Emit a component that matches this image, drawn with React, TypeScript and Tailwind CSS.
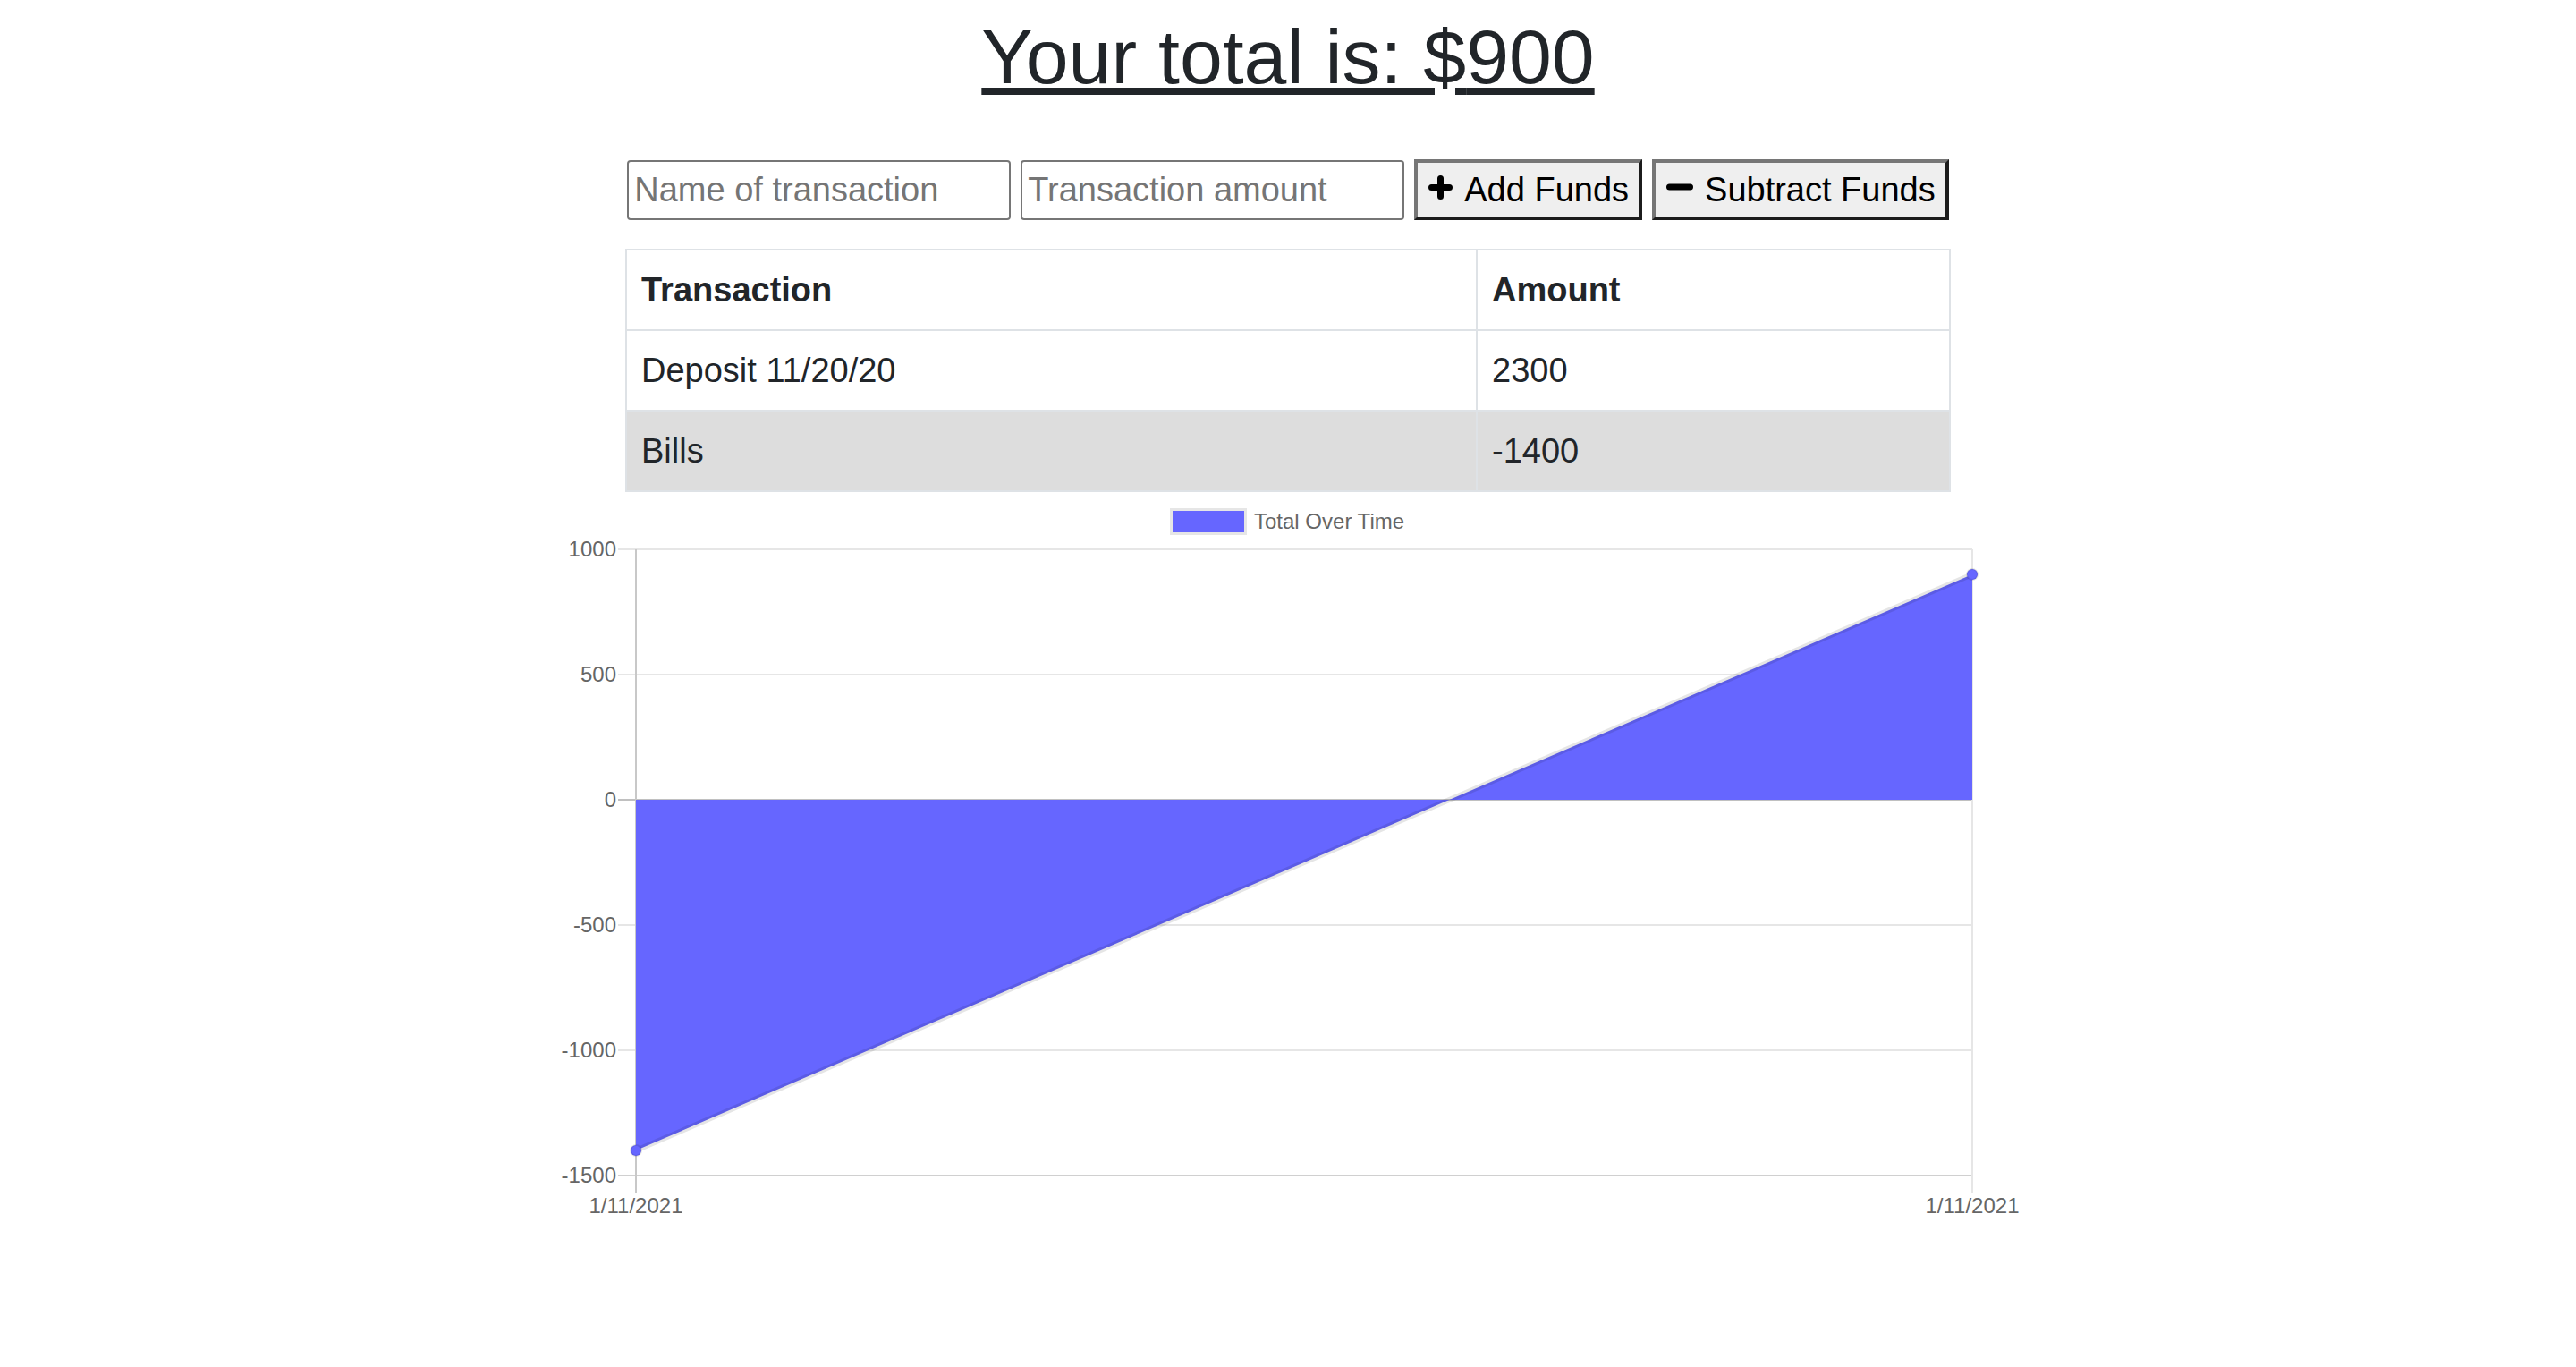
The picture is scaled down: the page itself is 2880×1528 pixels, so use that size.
import type { ReactNode } from 'react';

// budget tracker — total, add/subtract form, transaction table, area chart

const FONT = "font-['Liberation_Sans',Arial,Helvetica,sans-serif]";

const transactions = [
  { name: 'Deposit 11/20/20', value: 2300 },
  { name: 'Bills', value: -1400 },
];

// chart geometry (svg px)
const PLOT_L = 111;
const PLOT_R = 1605;
const PLOT_T = 53;
const ZERO_Y = 333;
const PX_PER_UNIT = 0.28;
const yOf = (v: number) => ZERO_Y - v * PX_PER_UNIT;
const Y_TICKS = [1000, 500, 0, -500, -1000, -1500];
const LABEL_FONT = 'Liberation Sans, Arial, sans-serif';

function PlusIcon() {
  return (
    <svg width="27" height="27" viewBox="0 0 27 27" className="mb-[6px] shrink-0">
      <path d="M3.5 13.5H23.5M13.5 3.5V23.5" stroke="#000" strokeWidth="7" strokeLinecap="round" />
    </svg>
  );
}

function MinusIcon() {
  return (
    <svg width="30" height="8" viewBox="0 0 30 8" className="mb-[6px] shrink-0">
      <rect x="0" y="0.5" width="30" height="7" rx="3.5" fill="#000" />
    </svg>
  );
}

function FundButton({ icon, children }: { icon: ReactNode; children: ReactNode }) {
  return (
    <button
      type="button"
      className="flex h-[68px] items-center gap-[13px] border-4 border-t-[#767676] border-l-[#767676] border-r-[#1c1c1c] border-b-[#1c1c1c] bg-[#efefef] pl-[12px] pr-[11px] text-[38px] text-black"
    >
      {icon}
      <span>{children}</span>
    </button>
  );
}

function TotalChart() {
  const endV = transactions.reduce((s, t) => s + t.value, 0);
  const startV = transactions[transactions.length - 1].value;
  const y0 = yOf(startV);
  const y1 = yOf(endV);
  const bottom = yOf(-1500);

  return (
    <svg width="1680" height="820" viewBox="0 0 1680 820" className="mt-[11px] block">
      {/* legend */}
      <rect x="709.5" y="8.5" width="83" height="27" fill="#6666ff" stroke="#e6e6e6" strokeWidth="3" />
      <text x="802" y="30" fontSize="24" fill="#666" fontFamily={LABEL_FONT}>
        Total Over Time
      </text>

      {/* horizontal grid + y ticks */}
      {Y_TICKS.map((v) => {
        const y = yOf(v);
        const stroke = v === 0 ? '#c0c0c0' : v === -1500 ? '#d0d0d0' : '#e6e6e6';
        return (
          <g key={v}>
            <line x1={91} x2={PLOT_R} y1={y} y2={y} stroke={stroke} strokeWidth="2" />
            <text x="89" y={y + 8} textAnchor="end" fontSize="24" fill="#666" fontFamily={LABEL_FONT}>
              {v}
            </text>
          </g>
        );
      })}

      {/* vertical grid + x ticks */}
      <line x1={PLOT_L} x2={PLOT_L} y1={PLOT_T} y2={bottom + 20} stroke="#c8c8c8" strokeWidth="2" />
      <line x1={PLOT_R} x2={PLOT_R} y1={PLOT_T} y2={bottom + 20} stroke="#e6e6e6" strokeWidth="2" />
      {[PLOT_L, PLOT_R].map((x) => (
        <text key={x} x={x} y="795" textAnchor="middle" fontSize="24" fill="#666" fontFamily={LABEL_FONT}>
          1/11/2021
        </text>
      ))}

      {/* area filled to origin */}
      <path
        d={`M${PLOT_L} ${ZERO_Y} L${PLOT_L} ${y0} L${PLOT_R} ${y1} L${PLOT_R} ${ZERO_Y} Z`}
        fill="#6666ff"
        fillRule="nonzero"
      />
      <line x1={PLOT_L} y1={y0} x2={PLOT_R} y2={y1} stroke="rgba(0,0,0,0.1)" strokeWidth="6" />
      <circle cx={PLOT_L} cy={y0} r="6" fill="#6666ff" stroke="rgba(0,0,0,0.1)" strokeWidth="2" />
      <circle cx={PLOT_R} cy={y1} r="6" fill="#6666ff" stroke="rgba(0,0,0,0.1)" strokeWidth="2" />
    </svg>
  );
}

export default function App() {
  const total = transactions.reduce((s, t) => s + t.value, 0);

  return (
    <div className={`flex min-h-screen flex-col items-center bg-white text-[#212529] ${FONT}`}>
      <h1 className="mt-[12px] text-[86px] leading-[1.2] font-normal underline">Your total is: ${total}</h1>

      <form className="mt-[63px] flex items-center gap-[11px]" onSubmit={(e) => e.preventDefault()}>
        <input
          type="text"
          placeholder="Name of transaction"
          className="h-[67px] w-[429px] rounded-[4px] border-2 border-[#767676] px-[6px] text-[38px] placeholder:text-[#757575] outline-none"
        />
        <input
          type="number"
          placeholder="Transaction amount"
          className="h-[67px] w-[429px] rounded-[4px] border-2 border-[#767676] px-[6px] text-[38px] placeholder:text-[#757575] outline-none"
        />
        <FundButton icon={<PlusIcon />}>Add Funds</FundButton>
        <FundButton icon={<MinusIcon />}>Subtract Funds</FundButton>
      </form>

      <table className="mt-[32px] w-[1482px] border-collapse text-[38px] leading-[56px]">
        <thead>
          <tr>
            <th className="w-[951px] border-2 border-[#dee2e6] px-4 py-4 text-left font-bold">Transaction</th>
            <th className="border-2 border-[#dee2e6] px-4 py-4 text-left font-bold">Amount</th>
          </tr>
        </thead>
        <tbody>
          {transactions.map((t, i) => (
            <tr key={t.name} className={i % 2 === 1 ? 'bg-[#dddddd]' : ''}>
              <td className="border-2 border-[#dee2e6] px-4 py-4">{t.name}</td>
              <td className="border-2 border-[#dee2e6] px-4 py-4">{t.value}</td>
            </tr>
          ))}
        </tbody>
      </table>

      <TotalChart />
    </div>
  );
}
